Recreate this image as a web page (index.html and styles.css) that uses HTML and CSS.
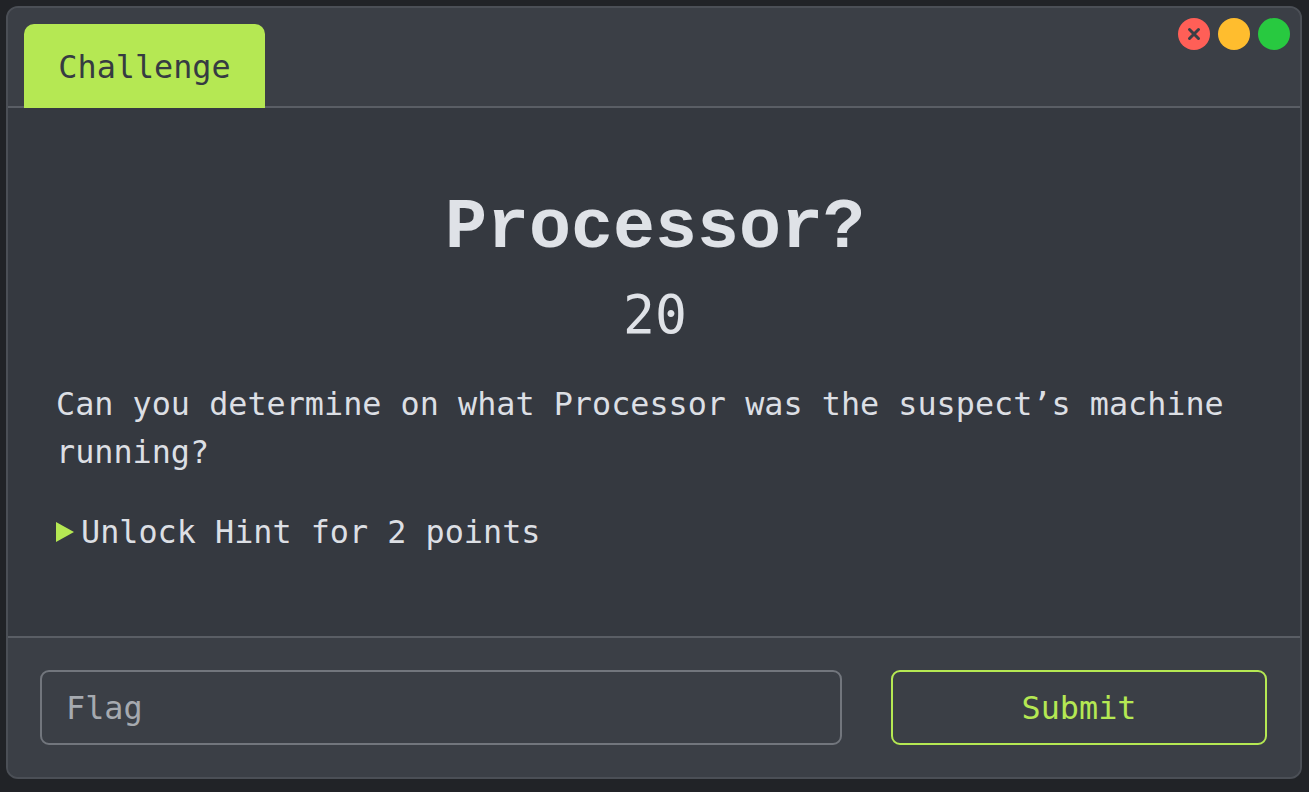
FILE: index.html
```html
<!DOCTYPE html>
<html lang="en">
<head>
<meta charset="utf-8">
<title>Challenge</title>
<link rel="stylesheet" href="styles.css">
</head>
<body>
<div class="window">
  <div class="header">
    <div class="tab">Challenge</div>
    <div class="lights">
      <span class="light red">
        <svg width="32" height="32" viewBox="0 0 32 32"><path d="M11.5 11.5 L20.5 20.5 M20.5 11.5 L11.5 20.5" stroke="#3a3e45" stroke-width="3" stroke-linecap="round"/></svg>
      </span>
      <span class="light yellow"></span>
      <span class="light green"></span>
    </div>
  </div>
  <div class="content">
    <h1 class="title">Processor?</h1>
    <div class="points">20</div>
    <p class="desc">Can you determine on what Processor was the suspect’s machine running?</p>
    <div class="hint"><span class="arrow"></span><span>Unlock Hint for 2 points</span></div>
  </div>
  <div class="footer">
    <input class="flag" type="text" placeholder="Flag">
    <button class="submit">Submit</button>
  </div>
</div>
</body>
</html>
```

FILE: styles.css
```css
* { box-sizing: border-box; }
html, body { margin: 0; padding: 0; }
body {
  background: #212327;
  padding: 6px;
  font-family: "DejaVu Sans Mono", "Liberation Mono", monospace;
}
.window {
  width: 1296px;
  height: 773px;
  border: 2px solid #4b4f56;
  border-radius: 12px;
  overflow: hidden;
  display: flex;
  flex-direction: column;
  background: #3b3f46;
}
.header {
  height: 100px;
  flex: none;
  display: flex;
  justify-content: space-between;
  align-items: flex-end;
  padding: 0 10px 0 16px;
  border-bottom: 2px solid #5a5e65;
  background: #3b3f46;
}
.tab {
  width: 241px;
  height: 84px;
  margin-bottom: -2px;
  background: #b5e853;
  border-radius: 10px 10px 0 0;
  color: #363b42;
  font-size: 31.8px;
  display: flex;
  align-items: center;
  justify-content: center;
}
.lights {
  align-self: flex-start;
  margin-top: 10px;
  display: flex;
  gap: 8px;
}
.light {
  width: 32px;
  height: 32px;
  border-radius: 50%;
  display: block;
}
.light svg { display: block; }
.red { background: #ff5f57; }
.yellow { background: #ffbd2e; }
.green { background: #28c940; }
.content {
  flex: 1;
  background: #353940;
  padding: 81px 46px 0 48px;
  color: #dcdfe4;
}
.title {
  margin: 0;
  text-align: center;
  font-family: "Liberation Mono", monospace;
  font-weight: bold;
  font-size: 70px;
  line-height: 80px;
  color: #dfe2e7;
}
.points {
  margin-top: 16px;
  text-align: center;
  font-size: 53px;
  line-height: 60px;
  color: #dfe2e7;
}
.desc {
  margin: 35px 0 0 0;
  font-size: 31.8px;
  line-height: 48px;
}
.hint {
  margin-top: 32px;
  font-size: 31.8px;
  line-height: 48px;
  display: flex;
  align-items: center;
}
.arrow {
  width: 0;
  height: 0;
  border-left: 18px solid #b5e853;
  border-top: 10px solid transparent;
  border-bottom: 10px solid transparent;
  margin-right: 7px;
}
.footer {
  flex: none;
  height: 141px;
  border-top: 2px solid #5a5e65;
  background: #3b3f46;
  display: flex;
  gap: 49px;
  padding: 32px 33px 32px 32px;
}
.flag {
  width: 802px;
  height: 75px;
  border: 2px solid #72767d;
  border-radius: 9px;
  background: #3b3f46;
  font-family: "DejaVu Sans Mono", monospace;
  font-size: 31.8px;
  color: #dcdfe4;
  padding: 0 0 0 24px;
  outline: none;
}
.flag::placeholder { color: #a6aab0; }
.submit {
  flex: 1;
  height: 75px;
  border: 2px solid #b5e853;
  border-radius: 9px;
  background: #3b3f46;
  color: #b5e853;
  font-family: "DejaVu Sans Mono", monospace;
  font-size: 31.8px;
  padding: 0;
}
```
